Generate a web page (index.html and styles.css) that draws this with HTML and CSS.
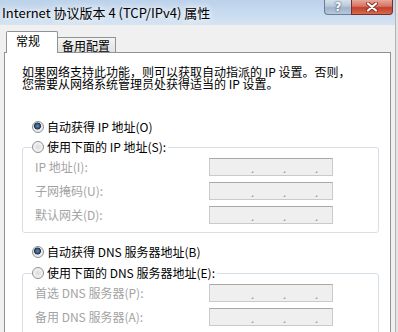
FILE: index.html
```html
<!DOCTYPE html>
<html lang="zh-CN">
<head>
<meta charset="utf-8">
<title>Internet 协议版本 4 (TCP/IPv4) 属性</title>
<link rel="stylesheet" href="styles.css">
</head>
<body>
<div class="window">
  <div class="titlebar">
    <div class="title">Internet 协议版本 4 (TCP/IPv4) 属性</div>
    <div class="caption-buttons">
      <div class="btn-help">?</div>
      <div class="btn-close">
        <svg width="14" height="10" viewBox="0 0 14 10">
          <path d="M3 1.5 L11 8.5 M11 1.5 L3 8.5" stroke="#8a2e22" stroke-width="4" stroke-linecap="round"/>
          <path d="M3 1.5 L11 8.5 M11 1.5 L3 8.5" stroke="#ffffff" stroke-width="2.2" stroke-linecap="round"/>
        </svg>
      </div>
    </div>
  </div>
  <div class="client">
    <div class="tabs">
      <div class="tab active">常规</div>
      <div class="tab">备用配置</div>
    </div>
    <div class="panel">
      <p class="desc">如果网络支持此功能，则可以获取自动指派的 IP 设置。否则，<br>您需要从网络系统管理员处获得适当的 IP 设置。</p>

      <div class="opt opt-ip"><span class="radio checked"></span>自动获得 IP 地址(O)</div>
      <fieldset class="group group-ip">
        <legend class="legend"><span class="opt-inline"><span class="radio"></span>使用下面的 IP 地址(S):</span></legend>
        <div class="fields">
          <span class="label">IP 地址(I):</span>
          <span class="ipbox"><span class="seg">.</span><span class="seg">.</span><span class="seg">.</span></span>
          <span class="label">子网掩码(U):</span>
          <span class="ipbox"><span class="seg">.</span><span class="seg">.</span><span class="seg">.</span></span>
          <span class="label">默认网关(D):</span>
          <span class="ipbox"><span class="seg">.</span><span class="seg">.</span><span class="seg">.</span></span>
        </div>
      </fieldset>

      <div class="opt opt-dns"><span class="radio checked"></span>自动获得 DNS 服务器地址(B)</div>
      <fieldset class="group group-dns">
        <legend class="legend"><span class="opt-inline"><span class="radio"></span>使用下面的 DNS 服务器地址(E):</span></legend>
        <div class="fields">
          <span class="label">首选 DNS 服务器(P):</span>
          <span class="ipbox"><span class="seg">.</span><span class="seg">.</span><span class="seg">.</span></span>
          <span class="label">备用 DNS 服务器(A):</span>
          <span class="ipbox"><span class="seg">.</span><span class="seg">.</span><span class="seg">.</span></span>
        </div>
      </fieldset>
    </div>
  </div>
</div>
</body>
</html>
```

FILE: styles.css
```css
* { box-sizing: border-box; }

html, body {
  margin: 0;
  padding: 0;
  background: #e4e4e4;
}

body {
  width: 398px;
  height: 332px;
  overflow: hidden;
  font-family: "Noto Sans CJK SC", "Noto Sans", sans-serif;
  font-size: 12px;
  color: #000;
}

.window {
  width: 396px;
  height: 332px;
  border-right: 1px solid #b4b4b4;
  background: #f0f0f0;
  display: flex;
  flex-direction: column;
}

/* ---------- title bar ---------- */
.titlebar {
  height: 25px;
  flex: none;
  display: flex;
  align-items: center;
  background: linear-gradient(to bottom, #bcd2ea 0%, #c9dcf0 60%, #d7e4f1 100%);
}

.title {
  padding-left: 2px;
  font-size: 13px;
  line-height: 14px;
  color: #000;
  text-shadow: 0 0 6px #ffffff, 0 0 10px #ffffff;
  white-space: nowrap;
}

.caption-buttons {
  margin-left: auto;
  margin-right: 2px;
  align-self: flex-start;
  display: flex;
}

.btn-help {
  width: 27px;
  height: 15px;
  border: 1px solid #6b7e95;
  border-top: none;
  border-right: none;
  border-bottom-left-radius: 4px;
  background: linear-gradient(to bottom, #d6e1ec 0%, #b8c8da 45%, #9fb3c9 55%, #b6c9dc 100%);
  color: #fff;
  font-family: "DejaVu Sans", sans-serif;
  font-weight: bold;
  font-size: 12px;
  line-height: 14px;
  text-align: center;
  text-shadow: 0 0 1px #3c4e66, 0 0 2px #3c4e66;
}

.btn-close {
  width: 42px;
  height: 15px;
  border: 1px solid #7a3026;
  border-top: none;
  border-bottom-right-radius: 4px;
  background: linear-gradient(to bottom, #e6a89b 0%, #d7725f 45%, #c2402c 55%, #d66a4f 100%);
  display: flex;
  align-items: center;
  justify-content: center;
}

/* ---------- client area ---------- */
.client {
  flex: 1;
  display: flex;
  flex-direction: column;
  padding-top: 6px;
}

.tabs {
  display: flex;
  align-items: flex-end;
  margin-left: 6px;
  height: 21px;
  flex: none;
}

.tab {
  height: 15px;
  padding: 2px 5px 0 4px;
  border: 1px solid #8f9398;
  border-bottom: none;
  border-left: none;
  background: linear-gradient(to bottom, #f3f3f3, #e3e3e3);
  line-height: 12px;
  white-space: nowrap;
}

.tab.active {
  position: relative;
  z-index: 1;
  width: 52px;
  height: 22px;
  margin-bottom: -1px;
  padding: 3px 0 0 9px;
  border-left: 1px solid #8f9398;
  border-radius: 2px 2px 0 0;
  background: #ffffff;
}

.panel {
  flex: 1;
  margin-left: 4px;
  width: 387px;
  background: #ffffff;
  border: 1px solid #8f9398;
  border-bottom: none;
  padding-left: 17px;
}

.desc {
  margin: 13px 0 0;
  line-height: 12px;
  white-space: nowrap;
}

/* ---------- radio options ---------- */
.opt {
  height: 16px;
  display: flex;
  align-items: center;
  padding-left: 10px;
  line-height: 16px;
  white-space: nowrap;
}

.opt-ip { margin-top: 29px; }
.opt-dns { margin-top: 11px; }

.opt-inline {
  display: flex;
  align-items: center;
  height: 16px;
  line-height: 16px;
  white-space: nowrap;
}

.radio {
  flex: none;
  width: 12px;
  height: 12px;
  margin-right: 3px;
  border-radius: 50%;
  border: 1px solid #8e9092;
  background: radial-gradient(circle at 50% 50%, #d9d9d9 0, #ececec 45%, #fbfbfb 100%);
}

.radio.checked {
  background: radial-gradient(circle at 45% 40%, #6b8fb8 0, #2e4d70 2.4px, #24364c 3.2px, #e6e6e6 3.8px, #fafafa 100%);
}

/* ---------- group boxes ---------- */
.group {
  width: 357px;
  margin: 4px 0 0;
  padding: 3px 0 8px 12px;
  border: 1px solid #d5dfe5;
  border-radius: 3px;
}

.group-dns { margin-top: 5px; }

.legend {
  margin-left: -3px;
  padding: 0 2px 0 0;
  height: 16px;
}

.fields {
  display: grid;
  grid-template-columns: 174px 124px;
  row-gap: 6px;
  align-items: center;
}

.label {
  color: #a3a3a3;
  line-height: 12px;
  white-space: nowrap;
}

.ipbox {
  height: 18px;
  display: flex;
  padding-left: 12px;
  border: 1px solid #cacaca;
  border-top-color: #a9a9a9;
  background: #efefef;
}

.seg {
  width: 32px;
  text-align: right;
  color: #8c8c8c;
  font-size: 11px;
  line-height: 18px;
}
```
